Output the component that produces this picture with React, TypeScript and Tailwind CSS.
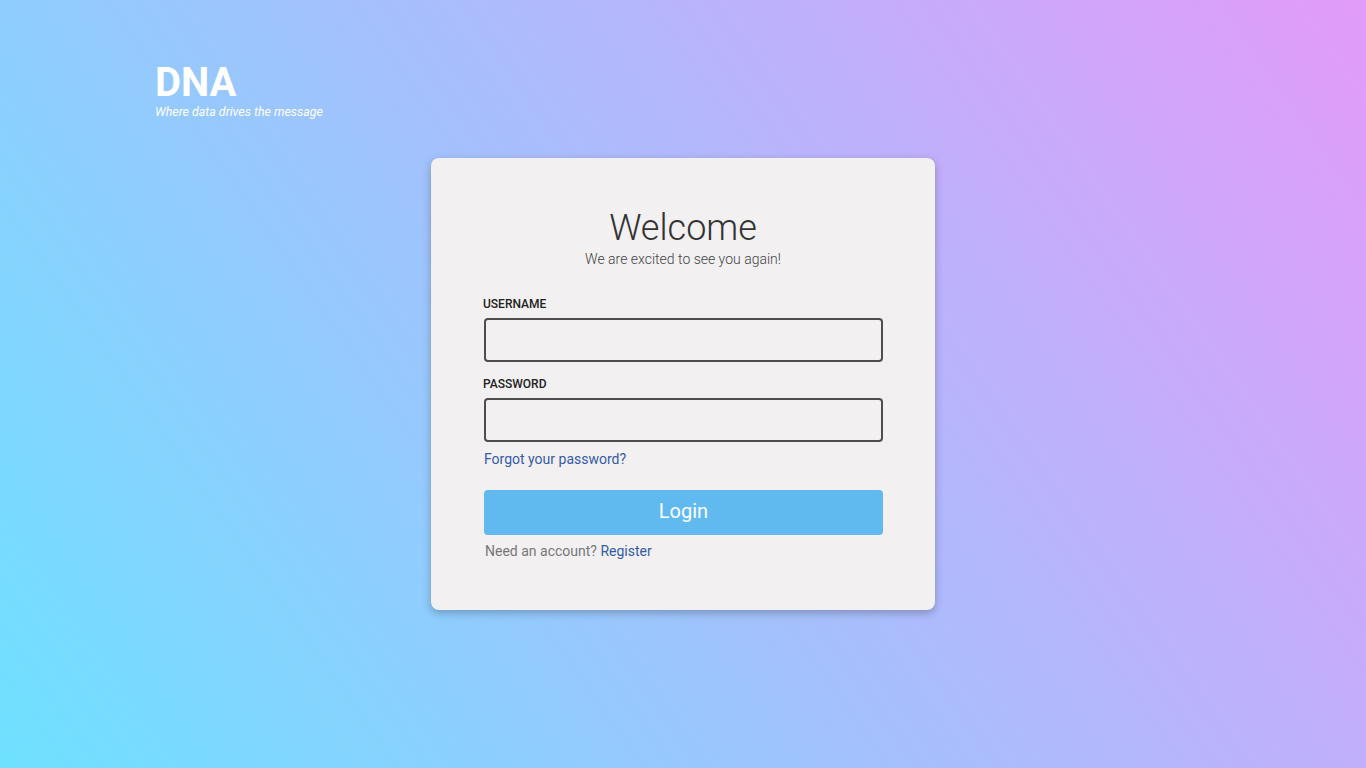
import React from 'react';

const App = () => {
  return (
    <div
      className="min-h-screen w-full bg-[linear-gradient(55deg,#6ee1ff,#e29bf9)]"
      style={{ fontFamily: 'Roboto, "Liberation Sans", sans-serif' }}
    >
      <div className="pt-[61px] pl-[155px] text-white">
        <div className="text-[40px] font-bold leading-[44px]">DNA</div>
        <div className="text-[12.4px] italic leading-[13px]">Where data drives the message</div>
      </div>

      <div className="flex justify-center pt-[40px]">
        <div className="w-[504px] h-[452px] bg-[#f2f0f1] rounded-[8px] shadow-[0_3px_8px_rgba(0,0,0,0.25)] px-[53px] pt-[49px]">
          <div className="text-center">
            <h1 className="text-[36px] font-light text-[#333] leading-[42px]">Welcome</h1>
            <p className="text-[14px] font-light text-[#444] leading-[18px] mt-[1px]">We are excited to see you again!</p>
          </div>

          <form className="mt-[29px]" onSubmit={(e) => e.preventDefault()}>
            <label className="block text-[12px] font-medium text-[#222] leading-[14px] -ml-[1px]">USERNAME</label>
            <input
              type="text"
              className="mt-[7px] block w-[399px] h-[44px] border-2 border-[#4d4d4d] rounded-[4px] bg-transparent px-2 outline-none"
            />
            <label className="block text-[12px] font-medium text-[#222] leading-[14px] mt-[15px] -ml-[1px]">PASSWORD</label>
            <input
              type="password"
              className="mt-[7px] block w-[399px] h-[44px] border-2 border-[#4d4d4d] rounded-[4px] bg-transparent px-2 outline-none"
            />
            <a href="#" className="block mt-[8px] text-[14px] text-[#355ba5] leading-[18px]">Forgot your password?</a>
            <button
              type="submit"
              className="mt-[22px] w-[399px] h-[45px] bg-[#60b9ef] rounded-[4px] text-white text-[20px] leading-[24px] pb-[3px]"
            >
              Login
            </button>
            <p className="mt-[7px] text-[14px] text-[#777] leading-[18px] ml-[1px]">
              Need an account? <a href="#" className="text-[#355ba5]">Register</a>
            </p>
          </form>
        </div>
      </div>
    </div>
  );
};

export default App;
